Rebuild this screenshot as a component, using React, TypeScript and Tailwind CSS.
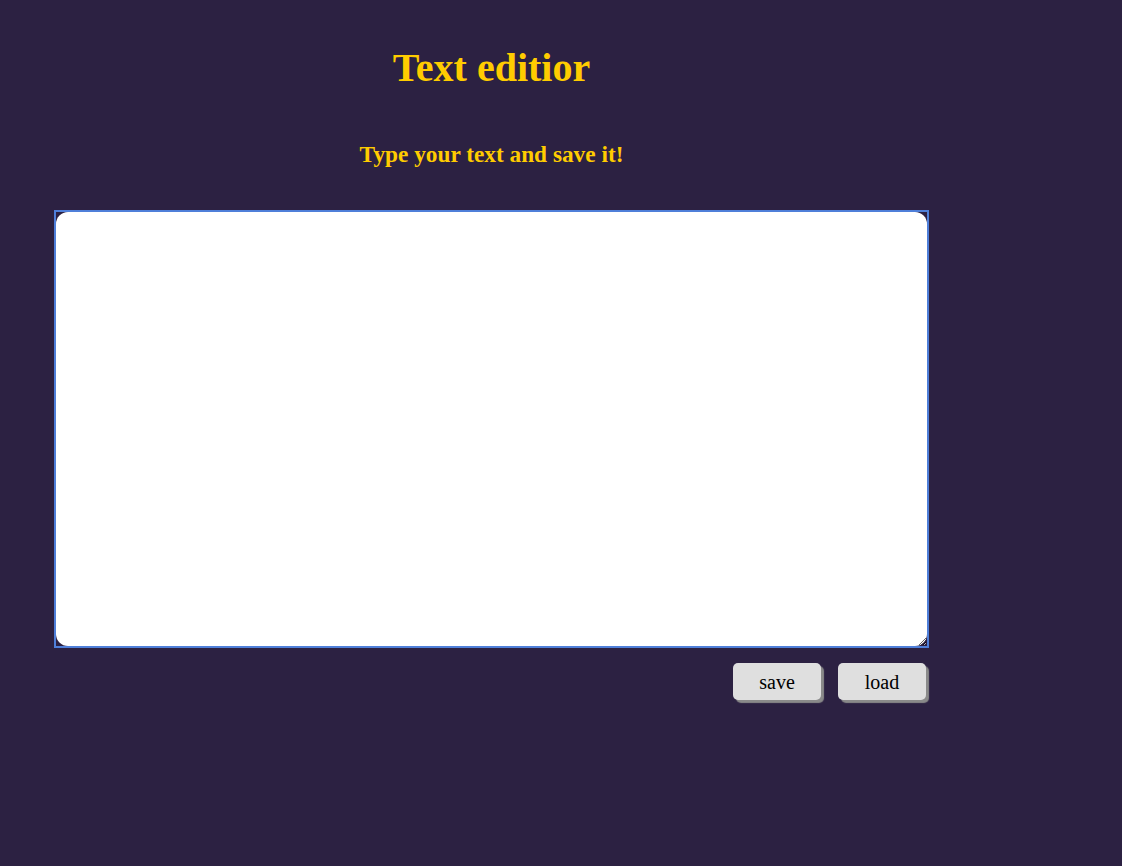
import React from "react";

export default function App() {
  return (
    <div className="min-h-[866px] w-full bg-[#2c2142]" style={{ fontFamily: '"Liberation Serif", "Times New Roman", serif' }}>
      <div className="ml-[54px] w-[875px] flex flex-col pt-[45px]">
        <h1 className="text-center text-[40px] leading-[46px] font-bold text-[#ffcc00]">Text editior</h1>
        <h2 className="mt-[50px] text-center text-[23.3px] leading-[26px] font-bold text-[#ffcc00]">Type your text and save it!</h2>
        <div className="mt-[43px] h-[438px] border-2 border-[#4f7fd9]">
          <textarea
            className="block h-full w-full rounded-[12px] bg-white p-2 text-black outline-none"
            style={{ resize: "both" }}
          />
        </div>
        <div className="mt-[15px] flex justify-end gap-[17px]">
          <button className="h-[37px] w-[88px] rounded-[5px] bg-[#dfdfdf] text-[20px] text-black shadow-[3px_3px_1px_0_#8a8a8a]">
            save
          </button>
          <button className="h-[37px] w-[88px] rounded-[5px] bg-[#dfdfdf] text-[20px] text-black shadow-[3px_3px_1px_0_#8a8a8a] mr-[3px]">
            load
          </button>
        </div>
      </div>
    </div>
  );
}
